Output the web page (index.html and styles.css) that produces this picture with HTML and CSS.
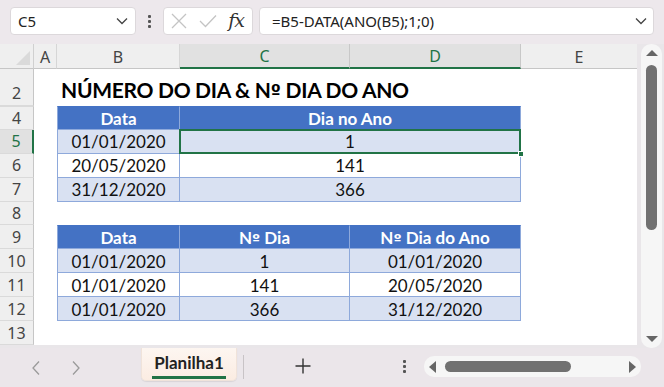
FILE: index.html
```html
<!DOCTYPE html>
<html lang="pt">
<head>
<meta charset="utf-8">
<title>Planilha</title>
<link rel="stylesheet" href="styles.css">
</head>
<body>
<div class="app">
  <div class="topbar">
    <div class="namebox">
      <span class="nb-text">C5</span>
      <svg class="chev" width="12" height="8" viewBox="0 0 12 8"><path d="M1 1.5 L6 6.5 L11 1.5" fill="none" stroke="#444" stroke-width="1.3"/></svg>
    </div>
    <div class="vdots"><i></i><i></i><i></i></div>
    <div class="fbtns">
      <svg width="16" height="16" viewBox="0 0 16 16"><path d="M1 1 L15 15 M15 1 L1 15" stroke="#c4c4c4" stroke-width="1.3" fill="none"/></svg>
      <svg width="18" height="14" viewBox="0 0 18 14"><path d="M1 7 L6.5 12.5 L17 1.5" stroke="#c4c4c4" stroke-width="1.3" fill="none"/></svg>
      <span class="fx">fx</span>
    </div>
    <div class="formula">
      <span class="f-text">=B5-DATA(ANO(B5);1;0)</span>
      <svg class="chev" width="12" height="8" viewBox="0 0 12 8"><path d="M1 1.5 L6 6.5 L11 1.5" fill="none" stroke="#444" stroke-width="1.3"/></svg>
    </div>
  </div>

  <div class="main">
    <div class="sheet">
      <div class="row colhdr">
        <div class="corner"><span class="tri"></span></div>
        <div class="ch">A</div>
        <div class="ch">B</div>
        <div class="ch sel">C</div>
        <div class="ch sel">D</div>
        <div class="ch last">E</div>
      </div>

      <div class="row r-title">
        <div class="rh">2</div>
        <div class="c"></div>
        <div class="title"><span>NÚMERO DO DIA &amp; N<span class="ord">º</span> DIA DO ANO</span></div>
      </div>

      <div class="row r-std r4">
        <div class="rh hidden-above">4</div>
        <div class="c"></div>
        <div class="t th first">Data</div>
        <div class="t th span2">Dia no Ano</div>
        <div class="c"></div>
      </div>
      <div class="row r-std">
        <div class="rh rsel">5</div>
        <div class="c"></div>
        <div class="t band first">01/01/2020</div>
        <div class="t band span2 active">1<span class="handle"></span></div>
        <div class="c"></div>
      </div>
      <div class="row r-std">
        <div class="rh">6</div>
        <div class="c"></div>
        <div class="t first">20/05/2020</div>
        <div class="t span2">141</div>
        <div class="c"></div>
      </div>
      <div class="row r-std">
        <div class="rh">7</div>
        <div class="c"></div>
        <div class="t band first">31/12/2020</div>
        <div class="t band span2">366</div>
        <div class="c"></div>
      </div>
      <div class="row r-std">
        <div class="rh">8</div>
        <div class="c full"></div>
      </div>
      <div class="row r-std">
        <div class="rh">9</div>
        <div class="c"></div>
        <div class="t th first top">Data</div>
        <div class="t th top"><span>N<span class="ord">º</span> Dia</span></div>
        <div class="t th top"><span>N<span class="ord">º</span> Dia do Ano</span></div>
        <div class="c"></div>
      </div>
      <div class="row r-std">
        <div class="rh">10</div>
        <div class="c"></div>
        <div class="t band first">01/01/2020</div>
        <div class="t band">1</div>
        <div class="t band">01/01/2020</div>
        <div class="c"></div>
      </div>
      <div class="row r-std">
        <div class="rh">11</div>
        <div class="c"></div>
        <div class="t first">01/01/2020</div>
        <div class="t">141</div>
        <div class="t">20/05/2020</div>
        <div class="c"></div>
      </div>
      <div class="row r-std">
        <div class="rh">12</div>
        <div class="c"></div>
        <div class="t band first">01/01/2020</div>
        <div class="t band">366</div>
        <div class="t band">31/12/2020</div>
        <div class="c"></div>
      </div>
      <div class="row r-std">
        <div class="rh">13</div>
        <div class="c full"></div>
      </div>
    </div>

    <div class="vscroll">
      <span class="arr up"></span>
      <span class="vthumb"></span>
      <span class="arr down"></span>
    </div>
  </div>

  <div class="bottombar">
    <div class="nav">
      <svg width="10" height="16" viewBox="0 0 10 16"><path d="M8 1.5 L2 8 L8 14.5" fill="none" stroke="#9a9a9a" stroke-width="1.3"/></svg>
      <svg width="10" height="16" viewBox="0 0 10 16"><path d="M2 1.5 L8 8 L2 14.5" fill="none" stroke="#9a9a9a" stroke-width="1.3"/></svg>
    </div>
    <div class="tab"><span class="tab-label">Planilha1</span></div>
    <div class="tabsep"></div>
    <div class="plus">
      <svg width="16" height="16" viewBox="0 0 16 16"><path d="M8 0.5 V15.5 M0.5 8 H15.5" stroke="#333" stroke-width="1.4"/></svg>
    </div>
    <div class="hdots"><i></i><i></i><i></i></div>
    <div class="hscroll">
      <span class="harr left"></span>
      <span class="hthumb"></span>
      <span class="harr right"></span>
    </div>
  </div>
</div>
</body>
</html>
```

FILE: styles.css
```css
* { box-sizing: border-box; }
html, body { margin: 0; padding: 0; }
body {
  width: 664px;
  height: 387px;
  overflow: hidden;
  background: #ebe6ea;
  font-family: "Lato", "Liberation Sans", sans-serif;
  color: #111;
}
.app { width: 664px; height: 387px; display: flex; flex-direction: column; }

/* top formula bar */
.topbar {
  height: 44px;
  display: flex;
  align-items: flex-start;
  padding: 7px 10px 0 10px;
  background: #ede8ec;
}
.namebox {
  width: 126px;
  height: 28px;
  background: #fff;
  border: 1px solid #dcd8db;
  border-radius: 4px;
  display: flex;
  align-items: center;
  justify-content: space-between;
  padding: 0 7px 0 7px;
  font-family: "Noto Sans", "Open Sans", sans-serif;
  font-size: 15px;
  color: #222;
}
.nb-text { margin-top: -1px; }
.vdots {
  width: 27px;
  height: 28px;
  display: flex;
  flex-direction: column;
  align-items: center;
  justify-content: center;
  gap: 2px;
}
.vdots i, .hdots i {
  display: block;
  width: 3px;
  height: 3px;
  background: #555;
  border-radius: 1px;
}
.fbtns {
  width: 90px;
  height: 28px;
  background: #fff;
  border: 1px solid #dcd8db;
  border-radius: 4px;
  display: flex;
  align-items: center;
  padding: 0 6px 0 7px;
  justify-content: space-between;
}
.fx {
  font-family: "DejaVu Serif", "Liberation Serif", serif;
  font-style: italic;
  font-size: 19px;
  color: #333;
  letter-spacing: -1px;
  margin-top: -3px;
  padding-right: 2px;
}
.formula {
  margin-left: 6px;
  width: 395px;
  height: 28px;
  background: #fff;
  border: 1px solid #dcd8db;
  border-radius: 4px;
  display: flex;
  align-items: center;
  justify-content: space-between;
  padding: 0 6px 0 12px;
  font-family: "Noto Sans", "Open Sans", sans-serif;
  font-size: 15px;
  color: #222;
}
.f-text { margin-top: -1px; }

/* main area */
.main {
  height: 304px;
  display: flex;
  align-items: flex-start;
  background: #e9e6e9;
}
.sheet {
  width: 637px;
  height: 301px;
  background: #fff;
  display: flex;
  flex-direction: column;
}
.row {
  display: grid;
  grid-template-columns: 34px 23px 123px 170px 171px 116px;
}
.colhdr { height: 23px; }
.r-title { height: 39px; }
.r4 { height: 23px; }
.r-std { height: 24px; }

.corner {
  background: #efefef;
  border-right: 1px solid #d0d0d0;
  border-bottom: 1px solid #c6c6c6;
  position: relative;
}
.tri {
  position: absolute;
  right: 3px;
  bottom: 3px;
  width: 0;
  height: 0;
  border-left: 14px solid transparent;
  border-bottom: 14px solid #dadada;
}
.ch {
  background: #efefef;
  border-right: 1px solid #d6d6d6;
  border-bottom: 1px solid #c6c6c6;
  display: flex;
  align-items: center;
  justify-content: center;
  font-size: 16px;
  color: #444;
  font-family: "Noto Sans", "Open Sans", sans-serif;
  padding-top: 1px;
}
.ch.sel {
  background: #e1e1e1;
  color: #217346;
  border-bottom: 2px solid #217346;
  border-right-color: #c8c8c8;
}
.ch.last { border-right: none; }

.rh {
  background: #efefef;
  border-right: 1px solid #c6c6c6;
  border-bottom: 1px solid #dadada;
  display: flex;
  align-items: center;
  justify-content: center;
  font-family: "Noto Sans", "Open Sans", sans-serif;
  font-size: 16px;
  color: #444;
}
.r-title .rh { align-items: flex-end; padding-bottom: 1px; }
.rh.hidden-above { border-top: 1px solid #dadada; }
.rh.rsel {
  background: #e1e1e1;
  color: #217346;
  border-right: 2px solid #217346;
}

.title {
  grid-column: 3 / 7;
  display: flex;
  align-items: flex-end;
  padding-left: 4px;
  padding-bottom: 4px;
  font-weight: 700;
  font-size: 21px;
  color: #000;
  white-space: nowrap;
  letter-spacing: -0.3px;
}
.ord {
  font-family: "DejaVu Sans", "Noto Sans", sans-serif;
  font-size: 0.85em;
  letter-spacing: 0;
}
.c.full { grid-column: 2 / 7; }

.t {
  display: flex;
  align-items: center;
  justify-content: center;
  font-size: 17px;
  color: #111;
  border-right: 1px solid #8ea9db;
  border-bottom: 1px solid #8ea9db;
  position: relative;
  padding-top: 1px;
  white-space: pre;
}
.t.first { border-left: 1px solid #8ea9db; }
.t.span2 { grid-column: span 2; }
.t.band { background: #d9e1f2; }
.th {
  background: #4472c4;
  color: #fff;
  font-weight: 700;
}
.th.top { border-top: 1px solid #4472c4; }
.r4 .th { border-top: 1px solid #4472c4; }
.active::after {
  content: "";
  position: absolute;
  left: -1px;
  top: -1px;
  right: -1px;
  bottom: -1px;
  border: 2px solid #217346;
}
.handle {
  position: absolute;
  right: -4px;
  bottom: -4px;
  width: 6px;
  height: 6px;
  background: #217346;
  border: 1px solid #fff;
  z-index: 2;
}

/* vertical scrollbar */
.vscroll {
  margin-left: 4px;
  width: 21px;
  height: 304px;
  background: #f6f6f6;
  border-radius: 10px;
  display: flex;
  flex-direction: column;
  align-items: center;
}
.arr {
  width: 0;
  height: 0;
  border-left: 6px solid transparent;
  border-right: 6px solid transparent;
}
.arr.up { margin-top: 6px; border-bottom: 6px solid #666; }
.arr.down { margin-top: auto; margin-bottom: 6px; border-top: 6px solid #666; }
.vthumb {
  margin-top: 9px;
  width: 11px;
  height: 165px;
  background: #717171;
  border-radius: 6px;
}

/* bottom bar */
.bottombar {
  flex: 1;
  display: flex;
  align-items: flex-start;
  background: #ebe6ea;
}
.nav {
  width: 141px;
  height: 36px;
  display: flex;
  align-items: center;
  padding-left: 31px;
  gap: 30px;
  padding-top: 3px;
}
.tab {
  width: 96px;
  height: 33px;
  background: linear-gradient(#fdf6f1, #fbece2);
  border: 1px solid #f0e3da;
  border-top: none;
  border-radius: 0 0 5px 5px;
  display: flex;
  flex-direction: column;
  align-items: center;
  justify-content: center;
  box-shadow: 0 1px 1px rgba(0,0,0,0.08);
}
.tab-label {
  font-weight: 700;
  font-size: 17px;
  color: #222;
  border-bottom: 3px solid #217346;
  line-height: 22px;
  padding: 0 2px 2px 2px;
  margin-top: 2px;
}
.tabsep {
  width: 1px;
  height: 24px;
  background: #c8c3c6;
  margin: 7px 0 0 6px;
}
.plus {
  margin: 10px 0 0 51px;
  height: 16px;
}
.hdots {
  margin: 12px 0 0 92px;
  display: flex;
  flex-direction: column;
  gap: 2px;
}
.hscroll {
  margin: 8px 0 0 18px;
  width: 217px;
  height: 21px;
  background: #f6f6f6;
  border-radius: 10px;
  display: flex;
  align-items: center;
  padding: 0 5px;
}
.harr {
  width: 0;
  height: 0;
  border-top: 6px solid transparent;
  border-bottom: 6px solid transparent;
}
.harr.left { border-right: 7px solid #666; }
.harr.right { border-left: 7px solid #666; margin-left: auto; }
.hthumb {
  margin-left: 9px;
  width: 126px;
  height: 11px;
  background: #717171;
  border-radius: 6px;
}
```
